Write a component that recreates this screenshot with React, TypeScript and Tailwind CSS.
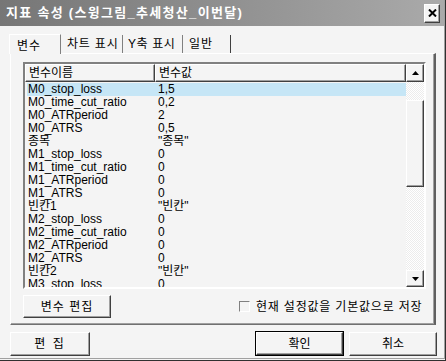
import React from 'react';

const rows: [string, string][] = [
  ['M0_stop_loss', '1,5'],
  ['M0_time_cut_ratio', '0,2'],
  ['M0_ATRperiod', '2'],
  ['M0_ATRS', '0,5'],
  ['종목', '"종목"'],
  ['M1_stop_loss', '0'],
  ['M1_time_cut_ratio', '0'],
  ['M1_ATRperiod', '0'],
  ['M1_ATRS', '0'],
  ['빈칸1', '"빈칸"'],
  ['M2_stop_loss', '0'],
  ['M2_time_cut_ratio', '0'],
  ['M2_ATRperiod', '0'],
  ['M2_ATRS', '0'],
  ['빈칸2', '"빈칸"'],
  ['M3_stop_loss', '0'],
];

const raised =
  'border border-t-white border-l-white border-r-[#404040] border-b-[#404040] shadow-[inset_-1px_-1px_0_#a0a0a0] bg-[#f4f4f4]';

function Btn({ label, className }: { label: string; className: string }) {
  return (
    <button type="button" className={`${raised} flex items-center justify-center text-[12px] text-black ${className}`}>
      {label}
    </button>
  );
}

export default function App() {
  return (
    <div
      className="w-[446px] h-[361px] bg-[#f4f4f4] border-r border-b border-r-[#303030] border-b-[#303030] overflow-hidden"
      style={{ fontFamily: '"Liberation Sans", "Noto Sans CJK KR", sans-serif' }}
    >
      <div className="h-[359px] border-r border-b border-r-[#a0a0a0] border-b-[#a0a0a0] flex flex-col">
        {/* title bar */}
        <div className="h-[26px] flex items-center justify-between pl-[6px] pr-[4px] bg-gradient-to-r from-[#767676] to-[#aaaaaa]">
          <span className="text-white font-bold text-[13px] tracking-[1.3px]">지표 속성 (스윙그림_추세청산_이번달)</span>
          <div className={`${raised} w-[16px] h-[19px] flex items-center justify-center`}>
            <svg width="9" height="8" viewBox="0 0 9 8">
              <path d="M1 0.5 L8 7.5 M8 0.5 L1 7.5" stroke="#000" strokeWidth="2" />
            </svg>
          </div>
        </div>

        {/* tabs */}
        <div className="flex items-end pl-[9px] mt-[7px] h-[20px] text-[12px]">
          <div className="h-[20px] w-[52px] border-t border-l border-t-white border-l-white border-r border-r-[#808080] pl-[7px] pt-[2px] bg-[#f4f4f4] relative top-px z-10 tracking-[1px]">
            변수
          </div>
          <div className="h-[18px] w-[62px] pl-[6px] border-r border-r-[#808080] tracking-[0.8px]">차트 표시</div>
          <div className="h-[18px] w-[60px] pl-[5px] border-r border-r-[#808080] tracking-[0.6px]">Y축 표시</div>
          <div className="h-[18px] pl-[6px] w-[48px] border-r border-r-[#404040] tracking-[1px]">일반</div>
        </div>

        {/* tab panel */}
        <div className="ml-[10px] w-[426px] h-[272px] border-t border-l border-t-white border-l-white border-r-2 border-r-[#606060] border-b border-b-[#707070] shadow-[inset_-1px_-1px_0_#a0a0a0] flex flex-col">
          {/* list */}
          <div className="mt-[8px] ml-[12px] w-[403px] h-[227px] border-2 border-t-[#808080] border-l-[#808080] border-r-white border-b-white flex">
            <div className="flex-1 flex flex-col overflow-hidden bg-[#f4f4f4]">
              <div className="flex h-[18px] text-[12px] leading-[16px] shrink-0">
                <div className={`${raised} w-[130px] pl-[3px]`}>변수이름</div>
                <div className={`${raised} flex-1 pl-[3px]`}>변수값</div>
              </div>
              <div className="pt-px text-[12px] leading-[13px] text-black">
                {rows.map(([name, value], i) => (
                  <div key={name} className={`flex h-[13px] ml-[2px] ${i === 0 ? 'bg-[#c6e6f6]' : ''}`}>
                    <span className="w-[131px] pl-px">{name}</span>
                    <span>{value}</span>
                  </div>
                ))}
              </div>
            </div>
            {/* scrollbar */}
            <div className="w-[18px] flex flex-col bg-[repeating-conic-gradient(#ffffff_0_25%,#ececec_0_50%)] bg-[length:2px_2px]">
              <div className={`${raised} h-[18px] flex items-center justify-center`}>
                <svg width="7" height="4" viewBox="0 0 7 4">
                  <path d="M3.5 0 L7 4 L0 4 Z" fill="#000" />
                </svg>
              </div>
              <div className="h-[18px]" />
              <div className={`${raised} h-[87px]`} />
              <div className="flex-1" />
              <div className={`${raised} h-[17px] flex items-center justify-center`}>
                <svg width="7" height="4" viewBox="0 0 7 4">
                  <path d="M0 0 L7 0 L3.5 4 Z" fill="#000" />
                </svg>
              </div>
            </div>
          </div>

          {/* panel bottom row */}
          <div className="flex items-center mt-[6px] ml-[12px] text-[12px]">
            <Btn label="변수 편집" className="w-[88px] h-[23px] tracking-[1px]" />
            <div className="ml-[128px] flex items-center">
              <div className="w-[11px] h-[11px] border border-t-[#808080] border-l-[#808080] border-r-white border-b-white bg-[#f4f4f4]" />
              <span className="ml-[6px] tracking-[0.8px]">현재 설정값을 기본값으로 저장</span>
            </div>
          </div>
        </div>

        {/* dialog buttons */}
        <div className="flex items-center mt-[6px] ml-[10px]">
          <Btn label="편 집" className="w-[80px] h-[24px] tracking-[2px]" />
          <div className="ml-[165px] w-[89px] h-[25px] border border-black">
            <Btn label="확인" className="w-full h-full" />
          </div>
          <Btn label="취소" className="ml-[5px] w-[88px] h-[24px]" />
        </div>
      </div>
    </div>
  );
}
